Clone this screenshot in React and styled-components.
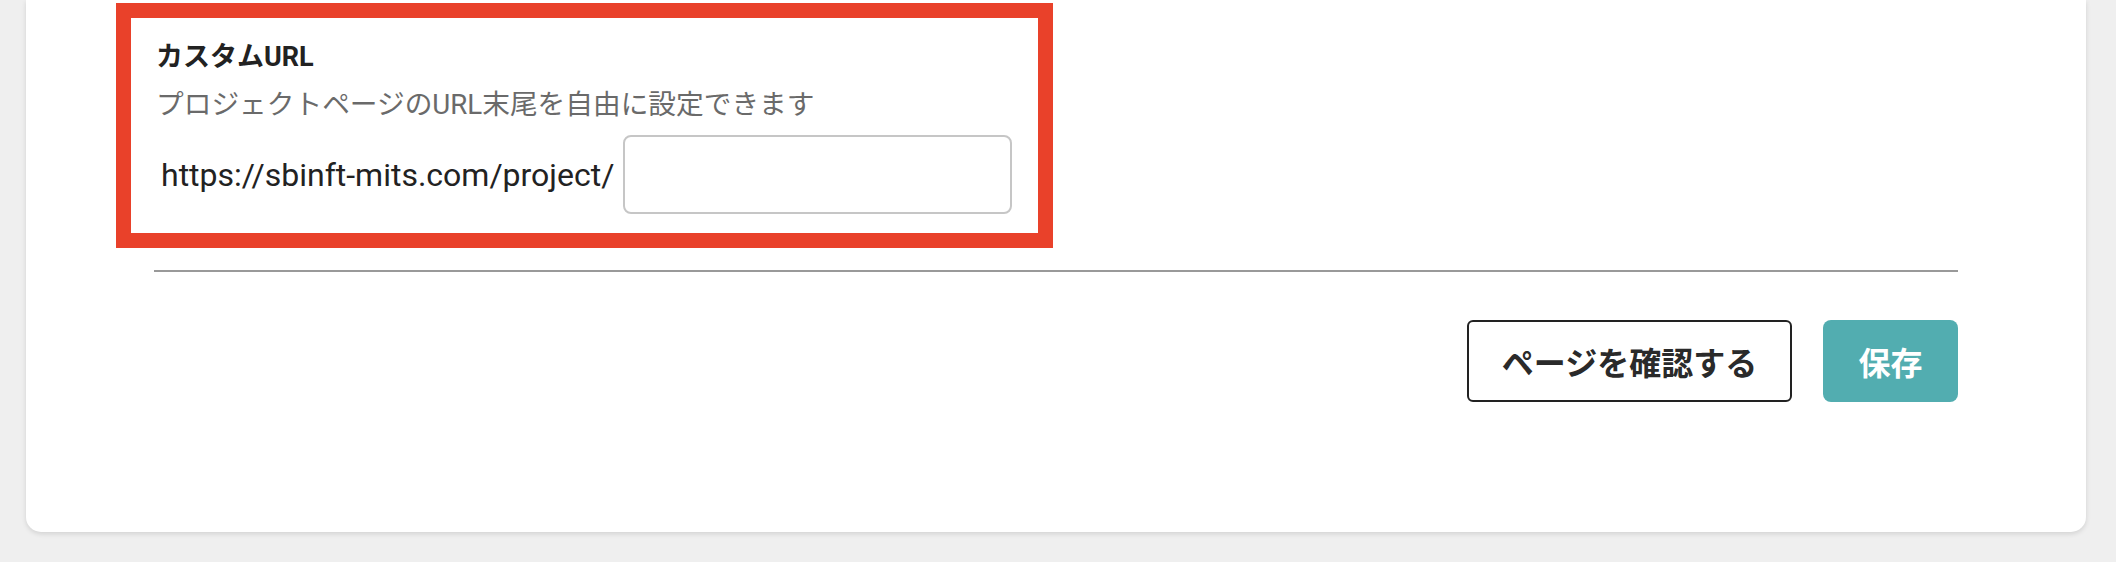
import styled, { createGlobalStyle } from 'styled-components'

const GlobalStyle = createGlobalStyle`
  html, body {
    margin: 0;
    padding: 0;
    background: #efefef;
  }
  body {
    font-family: Roboto, "Noto Sans CJK JP", sans-serif;
    color: #222;
  }
`

const Page = styled.div`
  padding: 0 30px 29px 26px;
`

const Card = styled.div`
  background: #fff;
  border-radius: 0 0 15px 15px;
  box-shadow: 0 2px 5px rgba(0, 0, 0, 0.12);
  padding: 3px 128px 130px 90px;
`

const Highlight = styled.div`
  width: 937px;
  box-sizing: border-box;
  border: 15px solid #e9412a;
  padding: 20px 24px 19px 25px;
`

const Title = styled.h3`
  margin: 0;
  font-size: 27px;
  line-height: 38px;
  font-weight: 700;
  color: #222;
`

const Description = styled.p`
  margin: 10px 0 0;
  font-size: 27.7px;
  line-height: 38px;
  color: #6a6a6a;
`

const UrlRow = styled.div`
  display: flex;
  align-items: center;
  gap: 9px;
  margin-top: 11px;
  padding-left: 5px;
`

const UrlPrefix = styled.span`
  font-size: 32px;
  color: #222;
  white-space: nowrap;
`

const Input = styled.input`
  width: 389px;
  height: 79px;
  box-sizing: border-box;
  border: 2px solid #c6c6c6;
  border-radius: 8px;
  background: #fff;
  font-size: 28px;
  padding: 0 14px;
  outline: none;
`

const Divider = styled.hr`
  margin: 22px 0 0 38px;
  border: none;
  height: 2px;
  background: #999;
`

const ButtonRow = styled.div`
  display: flex;
  justify-content: flex-end;
  gap: 31px;
  margin-top: 48px;
`

const Button = styled.button`
  height: 82px;
  box-sizing: border-box;
  padding: 0;
  font-family: "Noto Sans CJK JP", sans-serif;
  font-size: 32px;
  font-weight: 700;
  cursor: pointer;
  width: ${p => p.$primary ? '135px' : '325px'};
  border-radius: ${p => p.$primary ? '8px' : '6px'};
  border: ${p => p.$primary ? 'none' : '2px solid #222'};
  background: ${p => p.$primary ? '#52adb0' : '#fff'};
  color: ${p => p.$primary ? '#fff' : '#2a2a2a'};
`

export default function App() {
  return (
    <>
      <GlobalStyle />
      <Page>
        <Card>
          <Highlight>
            <Title>カスタムURL</Title>
            <Description>プロジェクトページのURL末尾を自由に設定できます</Description>
            <UrlRow>
              <UrlPrefix>https://sbinft-mits.com/project/</UrlPrefix>
              <Input type="text" />
            </UrlRow>
          </Highlight>
          <Divider />
          <ButtonRow>
            <Button type="button">ページを確認する</Button>
            <Button type="button" $primary>保存</Button>
          </ButtonRow>
        </Card>
      </Page>
    </>
  )
}
